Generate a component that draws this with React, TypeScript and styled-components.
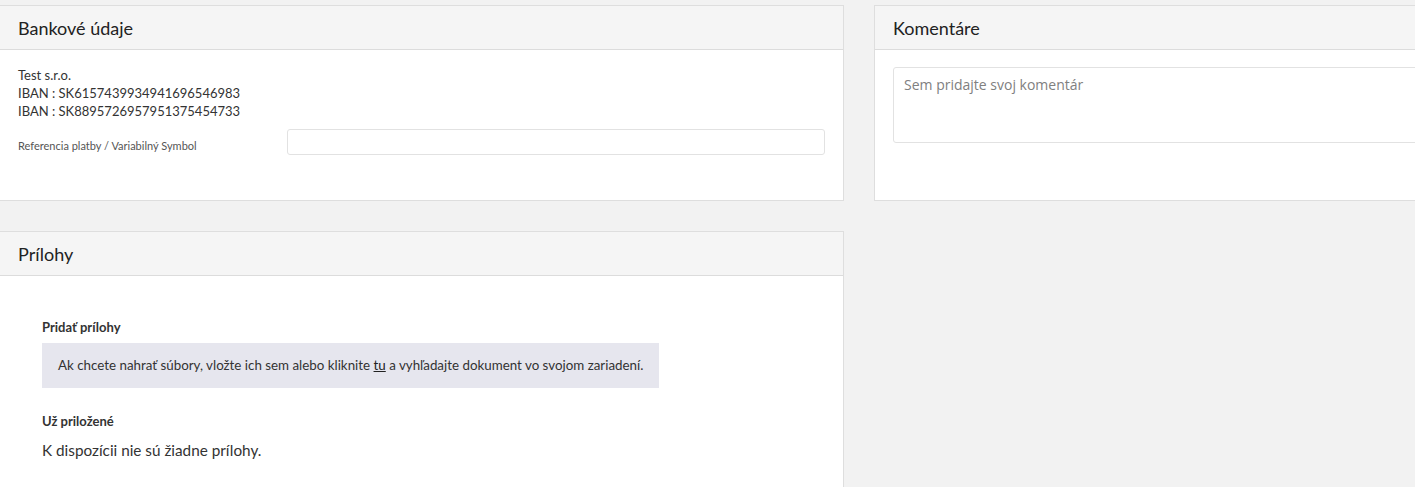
import { createGlobalStyle, styled } from "styled-components"

const GlobalStyle = createGlobalStyle`
  html, body {
    margin: 0;
    padding: 0;
    background: #f2f2f2;
    overflow: hidden;
  }
  body {
    font-family: Lato, "Open Sans", sans-serif;
    color: #333;
  }
`

const Page = styled.div`
  display: grid;
  grid-template-columns: 844px 844px;
  grid-template-rows: auto auto;
  column-gap: 30px;
  row-gap: 30px;
  padding-top: 5px;
  width: 1718px;
`

const Card = styled.section<{ $tall?: boolean; $edge?: boolean }>`
  background: #fff;
  border: 1px solid #dedede;
  border-left: ${(p) => (p.$edge ? "none" : "1px solid #dedede")};
  display: flex;
  flex-direction: column;
  min-height: ${(p) => (p.$tall ? "300px" : "196px")};
  box-sizing: border-box;
  align-self: start;
`

const CardHeader = styled.header`
  background: #f5f5f5;
  border-bottom: 1px solid #dcdcdc;
  height: 43px;
  display: flex;
  align-items: center;
  padding-left: 18px;
  font-size: 18px;
  color: #222;
`

const CardBody = styled.div<{ $pad?: string }>`
  padding: ${(p) => p.$pad ?? "16px 18px"};
  flex: 1;
`

const Lines = styled.div`
  font-size: 13px;
  line-height: 18px;
  color: #333;
`

const FieldRow = styled.div`
  display: grid;
  grid-template-columns: 269px 1fr;
  align-items: center;
  margin-top: 9px;
`

const FieldLabel = styled.label`
  font-size: 11px;
  color: #555;
  padding-top: 6px;
`

const TextInput = styled.input`
  height: 26px;
  box-sizing: border-box;
  border: 1px solid #e2e2e2;
  border-radius: 3px;
  background: #fff;
  outline: none;
`

const CommentBox = styled.textarea`
  display: block;
  width: 100%;
  box-sizing: border-box;
  height: 76px;
  border: 1px solid #e2e2e2;
  border-radius: 3px;
  padding: 7px 10px;
  resize: none;
  font-family: "Open Sans", sans-serif;
  font-size: 14px;
  color: #333;
  outline: none;
  &::placeholder {
    color: #808080;
  }
`

const SectionTitle = styled.h4`
  margin: 0 0 8px;
  font-size: 13px;
  font-weight: 700;
  color: #333;
`

const DropZone = styled.div`
  width: 617px;
  box-sizing: border-box;
  background: #e6e6ee;
  padding: 13px 16px;
  font-size: 13.35px;
  white-space: nowrap;
  color: #333;
  line-height: 19px;
`

const DropLink = styled.a`
  color: #222;
  text-decoration: underline;
  cursor: pointer;
`

const AttachedBlock = styled.div`
  margin-top: 25px;
`

const EmptyText = styled.p`
  margin: 12px 0 0;
  font-size: 15.3px;
  color: #333;
`

const App = () => {
  return (
    <>
      <GlobalStyle />
      <Page>
        <Card $edge>
          <CardHeader>Bankové údaje</CardHeader>
          <CardBody $pad="16px 18px 30px">
            <Lines>
              <div>Test s.r.o.</div>
              <div>IBAN : SK6157439934941696546983</div>
              <div>IBAN : SK8895726957951375454733</div>
            </Lines>
            <FieldRow>
              <FieldLabel>Referencia platby / Variabilný Symbol</FieldLabel>
              <TextInput type="text" />
            </FieldRow>
          </CardBody>
        </Card>
        <Card>
          <CardHeader>Komentáre</CardHeader>
          <CardBody $pad="17px 18px">
            <CommentBox placeholder="Sem pridajte svoj komentár" />
          </CardBody>
        </Card>
        <Card $tall $edge>
          <CardHeader>Prílohy</CardHeader>
          <CardBody $pad="43px 42px 20px">
            <SectionTitle>Pridať prílohy</SectionTitle>
            <DropZone>
              Ak chcete nahrať súbory, vložte ich sem alebo kliknite{" "}
              <DropLink>tu</DropLink> a vyhľadajte dokument vo svojom zariadení.
            </DropZone>
            <AttachedBlock>
              <SectionTitle>Už priložené</SectionTitle>
              <EmptyText>K dispozícii nie sú žiadne prílohy.</EmptyText>
            </AttachedBlock>
          </CardBody>
        </Card>
      </Page>
    </>
  )
}

export default App
